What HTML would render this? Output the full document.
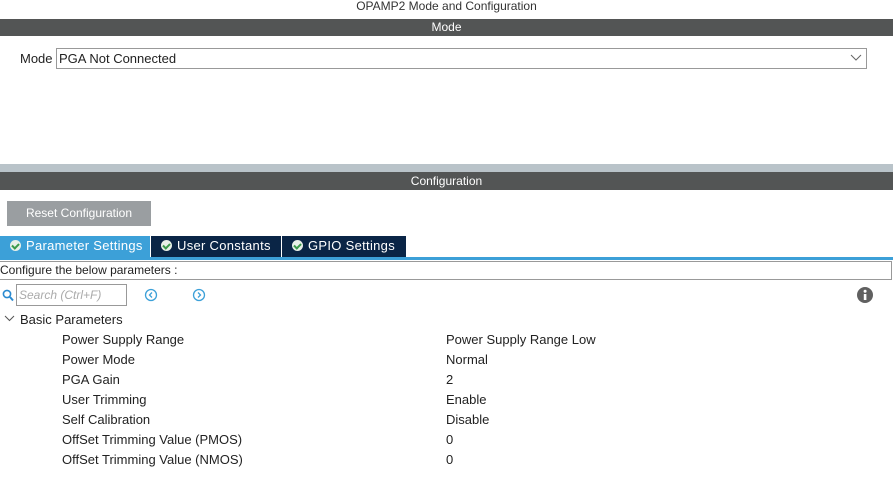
<!DOCTYPE html><html><head><style>
body{margin:0;width:893px;height:504px;background:#fff;font-family:"Liberation Sans",sans-serif;position:relative;overflow:hidden;font-size:13px;color:#222}
.a{position:absolute}
.bar{background:#535555;color:#fff;text-align:center;left:0;width:893px}
.tab{top:236px;height:21px;color:#fff;line-height:20px;font-size:13px;letter-spacing:0.3px}
.ck{display:inline-block;width:11px;height:11px;border-radius:50%;background:#e8f0e8;vertical-align:-1px;margin:0 5px 0 10px;position:relative}
.ck:after{content:"";position:absolute;left:3px;top:2px;width:3px;height:5px;border:solid #3a9a4a;border-width:0 2px 2px 0;transform:rotate(45deg)}
.r{left:62px}.v{left:446px}
</style></head><body>
<div class="a" style="left:0;width:893px;top:-1px;text-align:center;font-size:12px;color:#333">OPAMP2 Mode and Configuration</div>
<div class="a bar" style="top:19px;height:17px;line-height:17px;font-size:12px">Mode</div>
<div class="a" style="left:20px;top:51px">Mode</div>
<div class="a" style="left:56px;top:48px;width:807px;height:19px;border:1px solid #999;line-height:19px;padding-left:2px;box-sizing:content-box">PGA Not Connected</div>
<svg class="a" style="left:850px;top:54px" width="12" height="8"><path d="M1 1l5 5 5-5" fill="none" stroke="#666"/></svg>
<div class="a" style="left:0;top:164px;width:893px;height:8px;background:#b9c3c9"></div>
<div class="a bar" style="top:172px;height:18px;line-height:18px;font-size:12px">Configuration</div>
<div class="a" style="left:7px;top:201px;width:144px;height:25px;background:#9a9ea1;color:#fff;line-height:25px;text-align:center;font-size:12px">Reset Configuration</div>
<div class="a tab" style="left:0;width:150px;background:#3ca0d8"><span class="ck"></span>Parameter Settings</div>
<div class="a tab" style="left:151px;width:130px;background:#0a2546"><span class="ck"></span>User Constants</div>
<div class="a tab" style="left:282px;width:124px;background:#0a2546"><span class="ck"></span>GPIO Settings</div>
<div class="a" style="left:0;top:257px;width:893px;height:3px;background:#3ca0d8"></div>
<div class="a" style="left:-1px;top:261px;width:891px;height:17px;border:1px solid #999;line-height:17px;font-size:12px">Configure the below parameters :</div>
<svg class="a" style="left:2px;top:289px" width="12" height="13"><circle cx="5" cy="5" r="3.6" fill="none" stroke="#2a8ad0" stroke-width="1.6"/><path d="M8 8l3 3.5" stroke="#2a8ad0" stroke-width="2"/></svg>
<div class="a" style="left:16px;top:284px;width:107px;height:20px;border:1px solid #999;color:#aaa;font-style:italic;line-height:20px;padding-left:2px;font-size:12px">Search (Ctrl+F)</div>
<svg class="a" style="left:144px;top:288px" width="14" height="14"><circle cx="7" cy="7" r="5.5" fill="none" stroke="#3ca0d8" stroke-width="1.3"/><path d="M8 4.5L5.5 7 8 9.5" fill="none" stroke="#3ca0d8" stroke-width="1.3"/></svg>
<svg class="a" style="left:192px;top:288px" width="14" height="14"><circle cx="7" cy="7" r="5.5" fill="none" stroke="#3ca0d8" stroke-width="1.3"/><path d="M6 4.5L8.5 7 6 9.5" fill="none" stroke="#3ca0d8" stroke-width="1.3"/></svg>
<svg class="a" style="left:857px;top:287px" width="16" height="16"><circle cx="8" cy="8" r="8" fill="#606060"/><rect x="6.8" y="7" width="2.6" height="6" fill="#fff"/><circle cx="8.1" cy="4.3" r="1.5" fill="#fff"/></svg>
<svg class="a" style="left:4px;top:315px" width="11" height="8"><path d="M1 1l4.5 4.5L10 1" fill="none" stroke="#555"/></svg>
<div class="a" style="left:20px;top:312px">Basic Parameters</div>
<div class="a r" style="top:332px">Power Supply Range</div><div class="a v" style="top:332px">Power Supply Range Low</div>
<div class="a r" style="top:352px">Power Mode</div><div class="a v" style="top:352px">Normal</div>
<div class="a r" style="top:372px">PGA Gain</div><div class="a v" style="top:372px">2</div>
<div class="a r" style="top:392px">User Trimming</div><div class="a v" style="top:392px">Enable</div>
<div class="a r" style="top:412px">Self Calibration</div><div class="a v" style="top:412px">Disable</div>
<div class="a r" style="top:432px">OffSet Trimming Value (PMOS)</div><div class="a v" style="top:432px">0</div>
<div class="a r" style="top:452px">OffSet Trimming Value (NMOS)</div><div class="a v" style="top:452px">0</div>
</body></html>
